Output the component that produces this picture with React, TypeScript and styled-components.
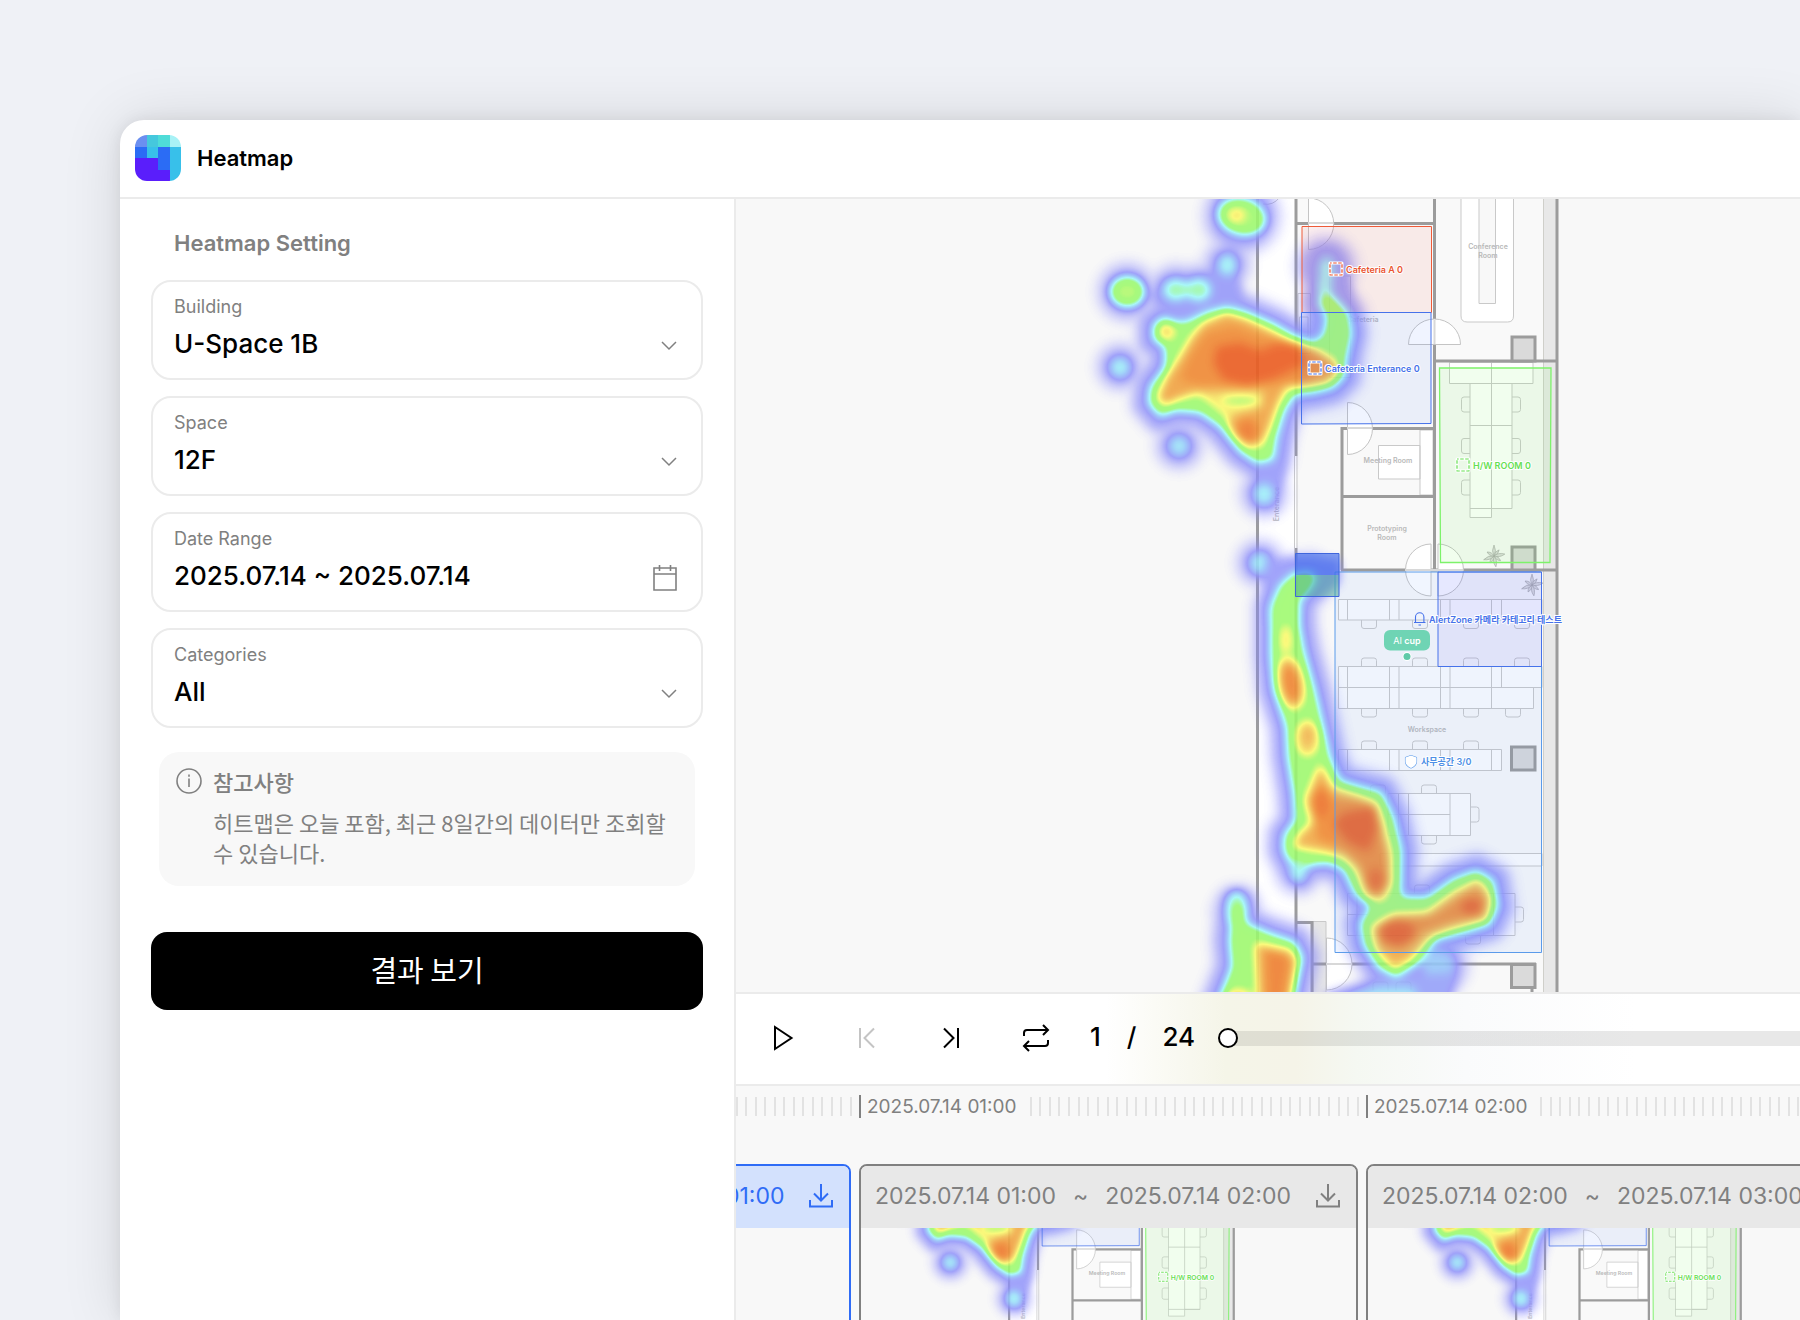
import React, { useId, useLayoutEffect, useRef, useState } from "react";
import styled, { createGlobalStyle, css } from "styled-components";

const font = `Inter, "Noto Sans CJK KR", sans-serif`;
const koreanFont = `"Noto Sans CJK KR", Inter, sans-serif`;

const color = {
  page: "#eff1f6",
  line: "#ebebeb",
  surface: "#f8f8f8",
  muted: "#808080",
  track: "#e8e8e8",
  blue: "#2f6cf6",
  blueSoft: "#d3e1fd",
};

const GlobalStyle = createGlobalStyle`
  *, *::before, *::after { box-sizing: border-box; }
  body { margin: 0; background: ${color.page}; font-family: ${font}; color: #000; }
  button, input, select { font: inherit; color: inherit; }
  h1, h2, p { margin: 0; }
`;

const Page = styled.div`
  display: flex;
  height: 100vh;
  padding: 120px 0 0 120px;
  overflow: hidden;
`;

const Window = styled.div`
  flex: 1;
  min-width: 0;
  display: flex;
  flex-direction: column;
  background: #fff;
  border-top-left-radius: 24px;
  overflow: hidden;
  box-shadow: 0 0 60px rgba(0, 0, 0, 0.12), 0 0 16px rgba(0, 0, 0, 0.08);
`;

const Header = styled.header`
  display: flex;
  align-items: center;
  gap: 16px;
  padding: 15px 15px 16px;
  border-bottom: 2px solid ${color.line};
`;

const AppName = styled.h1`
  font-size: 22px;
  line-height: 46px;
  font-weight: 600;
`;

const Body = styled.div`
  flex: 1;
  min-height: 0;
  display: flex;
`;

const Sidebar = styled.aside`
  flex: 0 0 616px;
  padding: 24px 31px;
  border-right: 2px solid ${color.line};
`;

const PanelTitle = styled.h2`
  padding: 4px 23px;
  margin-bottom: 17px;
  font-size: 22px;
  line-height: 32px;
  font-weight: 600;
  color: ${color.muted};
`;

const Form = styled.form`
  display: flex;
  flex-direction: column;
  gap: 16px;
`;

const Field = styled.div`
  display: flex;
  flex-direction: column;
  gap: 10px;
  padding: 14px 21px 18px;
  border: 2px solid ${color.line};
  border-radius: 20px;
`;

const FieldLabel = styled.label`
  font-size: 18px;
  line-height: 22px;
  color: ${color.muted};
`;

const FieldRow = styled.div`
  display: grid;
  align-items: center;
  justify-items: end;
  > * { grid-area: 1 / 1; }
`;

const control = css`
  width: 100%;
  height: 32px;
  padding: 0;
  border: 0;
  background: transparent;
  outline: none;
  appearance: none;
  font-size: 26px;
  line-height: 32px;
  font-weight: 500;
`;

const Select = styled.select`${control}`;
const TextInput = styled.input`${control}`;

const IconSlot = styled.span`
  display: flex;
  padding: 4px 3px 0 0;
  color: ${color.muted};
  pointer-events: none;
`;

const Notice = styled.section`
  display: grid;
  grid-template-columns: 26px 1fr;
  gap: 11px;
  margin: 8px 8px 0;
  padding: 14px 16px 19px 17px;
  border-radius: 20px;
  background: ${color.surface};
  color: ${color.muted};
  font-family: ${koreanFont};
  font-size: 22px;
  line-height: 30px;
`;

const NoticeIcon = styled.span`
  display: flex;
  align-items: center;
`;

const NoticeTitle = styled.h2`
  font-size: 22px;
  line-height: 30px;
  font-weight: 500;
`;

const NoticeText = styled.p`
  grid-column: 2;
`;

const SubmitButton = styled.button`
  height: 78px;
  margin-top: 30px;
  padding-bottom: 6px;
  border: 0;
  border-radius: 16px;
  background: #000;
  color: #fff;
  font-family: ${koreanFont};
  font-size: 29px;
  font-weight: 400;
  cursor: pointer;
`;

const Content = styled.main`
  flex: 1;
  min-width: 0;
  display: flex;
  flex-direction: column;
  background: ${color.surface};
`;

const Stage = styled.div`
  flex: 1;
  min-height: 0;
  overflow: hidden;
`;

const MapSvg = styled.svg`
  display: block;
  width: 100%;
  height: 100%;
  font-family: ${font};
`;

const Player = styled.div`
  display: flex;
  align-items: center;
  height: 94px;
  padding: 0 0 2px 34px;
  border-top: 2px solid ${color.line};
  border-bottom: 2px solid ${color.line};
  background: linear-gradient(90deg, #fff 370px, #f5f5e8 490px, #f5f4e8 560px, #f5f8f2 620px, #fafbfc 730px, #fff 900px);
`;

const Controls = styled.div`
  display: flex;
  gap: 54px;
`;

const IconButton = styled.button`
  display: flex;
  padding: 0;
  border: 0;
  background: none;
  color: #000;
  cursor: pointer;
  &:disabled { color: #c4c4c4; }
`;

const Counter = styled.div`
  display: flex;
  gap: 26px;
  margin: 0 23px 0 38px;
  padding-bottom: 2px;
  font-size: 26px;
  line-height: 32px;
  font-weight: 500;
`;

const Slider = styled.input`
  flex: 1;
  min-width: 0;
  height: 20px;
  margin: 0;
  appearance: none;
  background: linear-gradient(rgba(0, 0, 0, 0.09), rgba(0, 0, 0, 0.09)) 10px center / 100% 15px no-repeat;
  &::-webkit-slider-thumb {
    appearance: none;
    width: 20px;
    height: 20px;
    border: 2px solid #000;
    border-radius: 50%;
    background: #fff;
  }
`;

const Timeline = styled.section`
  flex: 0 0 234px;
  overflow: hidden;
`;

const Ruler = styled.div`
  display: flex;
  width: max-content;
  padding-top: 9px;
  margin-bottom: 46px;
`;

const RulerHour = styled.div`
  display: flex;
  align-items: center;
  gap: 13px;
  width: 507px;
  padding-right: 7px;
`;

const RulerLabel = styled.time`
  padding-left: 6px;
  border-left: 2px solid ${color.muted};
  font-size: 19px;
  line-height: 23px;
  color: ${color.muted};
`;

const Ticks = styled.div`
  flex: 1;
  display: flex;
  justify-content: space-between;
  height: 19px;
`;

const Tick = styled.i`
  width: 2px;
  background: #e2e2e2;
`;

const Frames = styled.div`
  display: flex;
  gap: 8px;
  width: max-content;
`;

const Frame = styled.article<{ $active: boolean }>`
  width: 499px;
  border: 2px solid ${(p) => (p.$active ? color.blue : color.muted)};
  border-radius: 8px;
  overflow: hidden;
  color: ${(p) => (p.$active ? color.blue : color.muted)};
`;

const FrameHeader = styled.header<{ $active: boolean }>`
  display: flex;
  align-items: center;
  justify-content: space-between;
  height: 62px;
  padding: 0 16px 2px 14px;
  background: ${(p) => (p.$active ? color.blueSoft : color.track)};
  font-size: 23px;
  line-height: 28px;
  button { color: inherit; }
`;

const Range = styled.div`
  display: flex;
  gap: 17px;
`;

const FrameMap = styled.div`
  height: 300px;
`;

/* ---------- icons ---------- */

const LogoSvg = styled.svg`
  border-radius: 12px;
`;

const Logo = () => {
  const cells = [
    ["#6b8ff0", "#45c8dd", "#4fdcd8", "#a8f2f6"],
    ["#2b6cf5", "#38c0ea", "#2b6cf5", "#38c0ea"],
    ["#5a1efb", "#5a1efb", "#2b6cf5", "#38c0ea"],
    ["#5a1efb", "#5a1efb", "#5a1efb", "#38c0ea"],
  ];
  return (
    <LogoSvg width="46" height="46" viewBox="0 0 4 4" aria-hidden="true" shapeRendering="crispEdges">
      {cells.map((row, y) => row.map((fill, x) => <rect key={`${x}-${y}`} x={x} y={y} width="1" height="1" fill={fill} />))}
    </LogoSvg>
  );
};

const stroke = { fill: "none", stroke: "currentColor", strokeWidth: 2 };

const Chevron = () => (
  <svg width="16" height="10" viewBox="0 0 16 10" {...stroke} strokeWidth={1.5}>
    <path d="M1 1l7 7 7-7" />
  </svg>
);

const CalendarIcon = () => (
  <svg width="24" height="26" viewBox="0 0 24 26" {...stroke} strokeWidth={1.6}>
    <path d="M1 3h22v22H1zM1 9h22M6.500 0v6M17.500 0v6" />
  </svg>
);

const InfoIcon = () => (
  <svg width="26" height="26" viewBox="0 0 26 26" {...stroke} strokeWidth={1.6}>
    <circle cx="13" cy="13" r="12" />
    <path d="M13 10.500v8.500M13 6.500v2.200" />
  </svg>
);

const PlayIcon = () => (
  <svg width="30" height="30" viewBox="0 0 30 30" {...stroke}>
    <path d="M5 4v22l16.500-11z" />
  </svg>
);

const PrevIcon = () => (
  <svg width="30" height="30" viewBox="0 0 30 30" {...stroke}>
    <path d="M6 5v20M20 5.500L10.500 15l9.500 9.500" />
  </svg>
);

const NextIcon = () => (
  <svg width="30" height="30" viewBox="0 0 30 30" {...stroke}>
    <path d="M20 5v20M6 5.500l9.500 9.500L6 24.500" />
  </svg>
);

const RepeatIcon = () => (
  <svg width="30" height="30" viewBox="0 0 30 30" {...stroke}>
    <path d="M2 13v-3a3 3 0 0 1 3-3h21M21 2l5 5-5 5M26 17v3a3 3 0 0 1-3 3H2M7 18l-5 5 5 5" />
  </svg>
);

const DownloadIcon = () => (
  <svg width="24" height="24" viewBox="0 0 24 24" {...stroke}>
    <path d="M12 0v16M5 9.500l7 7 7-7M1 16v6.500h22V16" />
  </svg>
);

/* ---------- floor map ---------- */

const gray = (v: number) => {
  const c = Math.round(v * 255);
  return `rgb(${c},${c},${c})`;
};

type Blob = { level: number; points?: string; e?: [number, number, number, number, number?] };

const halo1 = "440,365 500,350 560,365 640,400 700,435 760,455 790,435 800,380 775,335 795,305 825,325 865,370 875,430 860,500 855,560 820,595 760,610 705,615 675,660 650,740 640,810 590,820 540,785 480,710 420,668 350,662 300,680 265,640 270,590 315,530 315,470 280,450 280,405 310,380 350,395 380,395";
const halo2 = "280,100 330,92 350,110 330,150 300,180 300,260 312,330 345,450 370,560 390,650 420,720 480,738 545,755 582,830 606,930 604,1070 680,1072 760,1015 830,990 882,1020 895,1100 870,1155 790,1180 710,1200 655,1270 590,1312 535,1285 490,1215 480,1150 510,1100 465,1065 430,990 385,970 330,975 300,1010 280,990 250,930 252,885 285,840 280,760 262,650 258,560 222,450 212,350 212,200 240,135";
const halo3 = "100,1090 125,1090 140,1150 210,1180 285,1205 308,1250 285,1360 280,1420 40,1420 95,1280 88,1200";

const upper: Blob[] = [
  { level: 0.2, points: "300,260 450,240 520,180 540,270 560,350 400,420 330,360 270,330" },
  { level: 0.2, points: "770,170 830,165 865,240 885,330 905,430 880,520 790,450 745,420 745,260" },
  { level: 0.2, points: "600,600 720,600 680,850 650,960 580,960 580,850" },
  { level: 0.39, e: [180, 532, 30, 30] },
  { level: 0.62, e: [202, 305, 50, 44] },
  { level: 0.46, e: [348, 300, 38, 32] },
  { level: 0.46, e: [415, 300, 38, 34] },
  { level: 0.4, e: [502, 225, 28, 32] },
  { level: 0.37, e: [357, 768, 30, 30] },
  { level: 0.39, e: [612, 912, 30, 32] },
  { level: 0.38, e: [600, 1120, 30, 32] },
  { level: 0.6, e: [545, 80, 72, 54, 15] },
  { level: 0.76, e: [530, 76, 26, 20] },
  { level: 0.4, e: [800, 240, 22, 40] },
  { level: 0.4, e: [795, 290, 22, 40] },
  { level: 0.58, points: halo1 },
  { level: 0.76, e: [320, 425, 26, 26] },
  { level: 0.74, points: "400,600 640,590 610,660 520,700 450,640" },
  { level: 0.86, points: "430,400 500,370 560,388 640,425 700,455 760,475 822,510 836,545 800,578 740,588 680,594 655,640 626,720 604,765 562,772 522,735 500,690 540,670 610,650 610,602 420,606 360,625 315,645 292,625 320,560 360,500 395,440" },
  { level: 0.6, e: [540, 632, 56, 15] },
  { level: 0.91, points: "440,430 520,410 600,440 700,460 780,495 805,540 740,575 600,585 420,585 360,570 390,500" },
  { level: 0.94, e: [562, 722, 32, 34] },
  { level: 1, points: "470,470 540,458 600,482 650,460 710,460 740,520 640,568 560,588 490,570 460,520" },
];

const lower: Blob[] = [
  { level: 0.38, e: [180, 70, 30, 30] },
  { level: 0.2, points: "200,60 280,50 420,60 420,130 330,200 190,250 190,120" },
  { level: 0.31, e: [715, 1275, 48, 44] },
  { level: 0.22, points: "350,1420 380,1360 480,1330 560,1310 780,1300 740,1420" },
  { level: 0.36, points: "400,1420 460,1365 530,1340 640,1340 680,1420" },
  { level: 0.44, e: [110, 1110, 32, 60] },
  { level: 0.58, points: halo2 },
  { level: 0.58, points: halo3 },
  { level: 0.42, e: [295, 990, 24, 36] },
  { level: 0.74, e: [258, 300, 18, 46] },
  { level: 0.84, e: [272, 430, 38, 78, -10] },
  { level: 0.93, e: [274, 430, 22, 54, -10] },
  { level: 0.78, e: [322, 595, 34, 54] },
  { level: 0.84, e: [324, 588, 16, 26] },
  { level: 0.84, points: "360,670 400,745 480,770 530,790 552,860 572,940 574,1030 548,1082 500,1070 470,990 430,950 370,935 280,920 300,880 335,850 315,780" },
  { level: 0.91, points: "360,720 400,780 480,785 530,810 540,880 560,960 560,1030 530,1060 500,1040 480,970 420,920 350,900 345,800" },
  { level: 0.84, points: "515,1160 580,1122 680,1118 760,1060 835,1020 872,1070 860,1138 760,1164 690,1190 630,1262 580,1285 530,1230" },
  { level: 0.91, points: "540,1160 600,1140 700,1130 780,1075 835,1050 860,1090 840,1125 740,1145 660,1175 600,1230 550,1210" },
  { level: 1, points: "400,850 430,820 520,800 535,860 505,935 440,905" },
  { level: 0.98, e: [528, 1022, 26, 36] },
  { level: 1, e: [592, 1178, 54, 38] },
  { level: 1, e: [815, 1100, 32, 24] },
  { level: 0.96, e: [362, 790, 24, 44] },
  { level: 0.84, points: "165,1208 270,1230 292,1262 268,1420 175,1420" },
  { level: 0.93, points: "195,1230 260,1245 270,1270 245,1420 200,1420" },
  { level: 0.8, e: [115, 1375, 40, 26] },
];

const halos: [string, string][] = [
  ["translate(1060 190) scale(.3333)", halo1],
  ["translate(1200 540) scale(.3333)", halo2],
  ["translate(1200 540) scale(.3333)", halo3],
];

const Blobs = ({ blobs }: { blobs: Blob[] }) => (
  <>
    {blobs.map((b, i) =>
      b.points ? (
        <polygon key={i} points={b.points} fill={gray(b.level)} />
      ) : (
        <ellipse key={i} cx={b.e![0]} cy={b.e![1]} rx={b.e![2]} ry={b.e![3]} transform={`rotate(${b.e![4] ?? 0} ${b.e![0]} ${b.e![1]})`} fill={gray(b.level)} />
      )
    )}
  </>
);

const glowDots: [number, number, number][] = [
  [1120, 367, 21], [1127, 292, 27], [1179, 446, 21], [1264, 494, 21], [1260, 563, 21], [1242, 216, 36], [1227, 264, 21],
  [1237, 912, 22], [1438, 965, 28], [1166, 331, 24], [1326, 266, 28], [1176, 290, 23], [1198, 290, 23], [1298, 872, 20], [1400, 990, 36],
];

const glowSteps = [
  { w: 136, v: 0.03, grow: 8 },
  { w: 108, v: 0.08, grow: 3 },
  { w: 78, v: 0.18, grow: -4 },
];

const HeatLayer = () => {
  const id = useId();
  return (
    <>
      <filter id={id} filterUnits="userSpaceOnUse" x="1000" y="150" width="600" height="900" colorInterpolationFilters="sRGB">
        <feGaussianBlur stdDeviation="5" />
        <feColorMatrix values="1 0 0 0 0  1 0 0 0 0  1 0 0 0 0  1 0 0 0 0" />
        <feComponentTransfer>
          <feFuncR type="table" tableValues=".5 .52 .56 .58 .62 .6 .62 .98 .95 .94 .92" />
          <feFuncG type="table" tableValues=".5 .52 .57 .76 .97 .98 .98 .98 .76 .56 .37" />
          <feFuncB type="table" tableValues="1 .98 .98 .98 .97 .45 .42 .43 .34 .22 .14" />
          <feFuncA type="table" tableValues="0 .4 .84 .88 .88 .88 .88 .9 .92 .92 .92" />
        </feComponentTransfer>
      </filter>
      <g filter={`url(#${id})`}>
        <rect x="960" y="110" width="700" height="960" fill="#000" />
        {glowSteps.map(({ w, v, grow }) => (
          <g key={w} fill={gray(v)} stroke={gray(v)} strokeWidth={w} strokeLinejoin="round">
            {halos.map(([transform, points]) => (
              <polygon key={points} points={points} transform={transform} />
            ))}
            {glowDots.map(([x, y, r]) => (
              <circle key={`${x}-${y}`} cx={x} cy={y} r={r + grow} strokeWidth="0" />
            ))}
          </g>
        ))}
        <g transform="translate(1060 190) scale(.3333)"><Blobs blobs={upper} /></g>
        <g transform="translate(1200 540) scale(.3333)"><Blobs blobs={lower} /></g>
      </g>
    </>
  );
};

const chair = (x: number, y: number, side: "t" | "b" | "l" | "r") => {
  if (side === "b") return `M${x} ${y}v6q0 2.500 2.500 2.500h10q2.500 0 2.500-2.500v-6`;
  if (side === "t") return `M${x} ${y}v-6q0-2.500 2.500-2.500h10q2.500 0 2.500 2.500v6`;
  if (side === "r") return `M${x} ${y}h6q2.500 0 2.500 2.500v10q0 2.500-2.500 2.500h-6`;
  return `M${x} ${y}h-6q-2.500 0-2.500 2.500v10q0 2.500 2.500 2.500h6`;
};

const chairs = [
  ...[397, 438.5, 480].flatMap((y) => [chair(1470, y, "l"), chair(1512, y, "r")]),
  ...[1361.5, 1412.5, 1463.5, 1514.5].flatMap((x) => [chair(x, 620, "b"), chair(x, 666.5, "t")]),
  ...[1361.5, 1412.5, 1463.5, 1505.5].map((x) => chair(x, 708.5, "b")),
  ...[1361.5, 1412.5, 1463.5].map((x) => chair(x, 749.5, "t")),
  chair(1370.5, 793.5, "t"), chair(1421.5, 793.5, "t"), chair(1421.5, 835.5, "b"), chair(1470.5, 807, "r"),
  chair(1414.5, 893.5, "t"), chair(1465.5, 935.5, "b"), chair(1515, 907, "r"),
  chair(1373, 990.5, "t"), chair(1396, 990.5, "t"),
].join("");

const Plant = ({ x, y }: { x: number; y: number }) => (
  <g transform={`translate(${x} ${y})`} fill="#dcdcdc" stroke="#a6a6a6" strokeWidth=".6">
    {[0, 40, 80, 125, 170, 210, 250, 300].map((a, i) => (
      <path key={a} transform={`rotate(${a})`} d={i % 2 ? "M0 0Q-2.500-4 0-8Q2.500-4 0 0" : "M0 0Q-3-5 0-11Q3-5 0 0"} />
    ))}
  </g>
);

type RoomName = { x: number; y: number; name: string; upright?: boolean };

const roomNames: RoomName[] = [
  { x: 1488, y: 249, name: "Conference" },
  { x: 1488, y: 258, name: "Room" },
  { x: 1363, y: 322, name: "Cafeteria" },
  { x: 1388, y: 463, name: "Meeting Room" },
  { x: 1387, y: 531, name: "Prototyping" },
  { x: 1387, y: 540, name: "Room" },
  { x: 1427, y: 732, name: "Workspace" },
  { x: 1279, y: 504, name: "Enterance", upright: true },
];

const FloorPlan = ({ top }: { top: number }) => (
  <>
    <rect x="1258" y="190" width="38" height="810" fill="#fff" />
    <rect x="1296" y="190" width="260" height="810" fill="#f9f9f9" />
    <rect x="1543" y="190" width="13" height="810" fill="#e8e8e8" />
    <path d="M1543.500 190v810" stroke="#cfcfca" />
    <g fill="#fff" stroke="#c9c9c9">
      <path d="M1461 190v126q0 6 6 6h40.500q6 0 6-6V190z" />
      <path d="M1479 190v113.500h16.500V190" fill="#f8f8f8" />
      <path d="M1449.500 362.500h83.500v21h-83.500zM1470 383.500h42v125h-20.500v9H1470zM1491.500 362v147M1470 425.500h42M1470 508.500h42" />
      <path d="M1378.500 445.500h41.500V479h-41.500zM1420 430h13v65h-13z" />
      <path d="M1298 293.500h12.500v60H1298zM1299.500 317h8.500v19h-8.500zM1329.500 276h21v101.500h-21z" fill="none" />
      <g fill="#fdfdfd">
        <path d="M1338.500 599.500H1542V620h-203.500zM1338.500 666.500H1542v21h-203.500zM1338.500 687.500h195v21h-195zM1338.500 749.500h163v21h-163zM1388 793.500h82.500v42H1388zM1347.500 893.500H1515v42h-167.500zM1380 853.500h162V866h-162z" />
        <path d="M1347.500 599.500V620m0 46.500v42m0 41v21M1389.500 599.500V620m0 46.500v42m0 41v21M1399 599.500V620m0 46.500v42m0 41v21M1440.500 599.500V620m0 46.500v42m0 41v21M1450 599.500V620m0 46.500v42m0 41v21M1491.500 599.500V620m0 46.500v42m0 41v21M1501.500 599.500V620m0 46.500v21M1398.500 793.500v42M1408.500 793.500v42M1450 793.500v42M1388 814.500h62M1357 893.500v42M1493.500 893.500v42M1347.500 914.500h20" />
      </g>
      <path d={chairs} fill="none" />
      <path d="M1313 921.500h13V1000h-13z" fill="#e6e6e6" />
    </g>
    <g fill="none" stroke="#9c9c9c" strokeWidth="3">
      <path d="M1257.500 190v810M1296 190v266M1296 548v452M1296 223.500h138M1434.500 190v380M1434 361h123M1557 190v810M1341 428.500h93M1342 427v143M1342 496.500h92M1341 570h215M1296 922.500h16V1000M1313 964h223M1532 988v12" />
      <g fill="#dadada">
        <path d="M1512 337h23v24h-23zM1512 547h23v23h-23zM1511.500 747h23.500v23h-23.500zM1511.500 964.500h23.500v23h-23.500z" />
      </g>
    </g>
    <path d="M1294.500 456v92M1297 456v92" stroke="#c9c9c9" />
    <g fill="#fff" stroke="#c4c4c4">
      <path d="M1308.500 198a25 25.500 0 0 1 0 51.500zM1408.500 344.500a26 25.500 0 0 1 52 0zM1347.500 402.500a25 26 0 0 1 0 52zM1431 544a25.500 26 0 0 0 0 52zM1438 544a25.500 26 0 0 1 0 52zM1326.500 938a25.500 26 0 0 1 0 52z" />
      <path d="M1308 223h25M1347 428h25M1405 570h58M1326 964h25M1434.500 320v24" stroke="#d8d8d8" strokeWidth="2" />
      <path d="M1263 204q10 2 17-7" fill="none" />
    </g>
    <Plant x={1494} y={556} />
    <Plant x={1532} y={585} />
    <g fill="#b9b9b9" fontSize="7" fontWeight="600" textAnchor="middle">
      {roomNames.filter((r) => r.y > top).map((r) => (
        <text key={`${r.name}-${r.y}`} transform={`translate(${r.x} ${r.y})${r.upright ? " rotate(-90)" : ""}`}>{r.name}</text>
      ))}
    </g>
  </>
);

const Zones = () => (
  <>
    <path d="M1302 226.500h129.500v86H1302z" fill="rgba(245,70,40,.08)" stroke="#ee5a38" />
    <path d="M1301.500 312.500h129.500V423.500l-129.500.5z" fill="rgba(70,120,250,.08)" stroke="#4672ea" />
    <path d="M1439.500 368H1551l-1 194.500h-109.500z" fill="rgba(120,250,90,.1)" stroke="#7df26a" strokeWidth="1.300" />
    <path d="M1335 572h206.500v380.500H1335z" fill="rgba(80,140,250,.08)" stroke="#5b9bea" />
    <path d="M1438 572h103.500v94.500H1438z" fill="rgba(80,60,250,.07)" stroke="#4672ea" />
    <path d="M1295.500 553.500h43.500V575h-43.500z" fill="rgba(58,104,232,.62)" />
    <path d="M1295.500 575h43.500v21.500h-43.500z" fill="rgba(60,165,140,.48)" />
    <path d="M1295.500 553.500h43.500v43h-43.500z" fill="none" stroke="#3f66dc" />
  </>
);

const ZoneMark = ({ x, y, ink }: { x: number; y: number; ink: string }) => (
  <g fill="none">
    <rect x={x} y={y} width="12" height="12" stroke="#fff" strokeWidth="3" />
    <rect x={x} y={y} width="12" height="12" stroke={ink} strokeWidth="1.200" strokeDasharray="3.500 1.500" strokeDashoffset="1.800" />
  </g>
);

const zoneLabels = [
  { x: 1346, y: 273, ink: "#ea5431", name: "Cafeteria A 0" },
  { x: 1325, y: 372, ink: "#4672ea", name: "Cafeteria Enterance 0" },
  { x: 1473, y: 469, ink: "#66e052", name: "H/W ROOM 0" },
];

const MapLabels = ({ top }: { top: number }) => (
  <g fontSize="9" fontWeight="600" stroke="#fff" strokeWidth="2" strokeLinejoin="round" paintOrder="stroke">
    {zoneLabels.filter((z) => z.y > top).map((z) => (
      <g key={z.name}>
        <ZoneMark x={z.x - 16} y={z.y - 10} ink={z.ink} />
        <text x={z.x} y={z.y} fill={z.ink}>{z.name}</text>
      </g>
    ))}
    <path d="M1414 622.500h11.500M1415.500 622v-5a4.200 4.200 0 0 1 8.400 0v5M1418.500 625h2.500" stroke="#4672ea" strokeWidth="1.100" fill="none" />
    <text x="1429" y="623" fill="#4672ea">AlertZone 카메라 카테고리 테스트</text>
    <path d="M1411 755.500l5.500 2v4q0 4-5.500 6.500q-5.500-2.500-5.500-6.500v-4z" stroke="#5b9bea" strokeWidth="1.100" fill="#fff" />
    <text x="1421" y="765" fill="#4d8fe6">사무공간 3/0</text>
    <g stroke="none">
      <rect x="1384" y="630" width="46" height="20.500" rx="6" fill="#6fd4b4" />
      <text x="1407" y="644" fill="#fff" textAnchor="middle"><tspan fontWeight="400">AI</tspan> <tspan>cup</tspan></text>
      <circle cx="1407" cy="656.500" r="3.500" fill="#5fcaa8" stroke="#fff" />
    </g>
  </g>
);

const HeatMap = ({ box }: { box: [number, number, number, number] }) => (
  <MapSvg viewBox={box.join(" ")} preserveAspectRatio="xMinYMin slice" role="img" aria-label="12F">
    <FloorPlan top={box[1]} />
    <HeatLayer />
    <Zones />
    <MapLabels top={box[1]} />
  </MapSvg>
);

/* ---------- page ---------- */

const hours = ["00:00", "01:00", "02:00", "03:00", "04:00"];
const day = "2025.07.14";

const SelectField = ({ id, label, options }: { id: string; label: string; options: string[] }) => (
  <Field>
    <FieldLabel htmlFor={id}>{label}</FieldLabel>
    <FieldRow>
      <Select id={id}>
        {options.map((o) => <option key={o}>{o}</option>)}
      </Select>
      <IconSlot><Chevron /></IconSlot>
    </FieldRow>
  </Field>
);

const HourTimeline = () => {
  const ref = useRef<HTMLElement>(null);
  useLayoutEffect(() => {
    if (ref.current) ref.current.scrollLeft = 384;
  }, []);
  return (
    <Timeline ref={ref}>
      <Ruler>
        {hours.slice(0, 3).map((h) => (
          <RulerHour key={h}>
            <RulerLabel>{day} {h}</RulerLabel>
            <Ticks>{Array.from({ length: 35 }, (_, i) => <Tick key={i} />)}</Ticks>
          </RulerHour>
        ))}
      </Ruler>
      <Frames>
        {hours.slice(0, 3).map((h, i) => (
          <Frame key={h} $active={i === 0}>
            <FrameHeader $active={i === 0}>
              <Range>
                <time>{day} {h}</time>
                <span>~</span>
                <time>{day} {hours[i + 1]}</time>
              </Range>
              <IconButton aria-label="Download"><DownloadIcon /></IconButton>
            </FrameHeader>
            <FrameMap>
              {i > 0 && <HeatMap box={[1060, 400, 660, 400]} />}
            </FrameMap>
          </Frame>
        ))}
      </Frames>
    </Timeline>
  );
};

export default function App() {
  const [step, setStep] = useState(1);
  return (
    <>
      <GlobalStyle />
      <Page>
        <Window>
          <Header>
            <Logo />
            <AppName>Heatmap</AppName>
          </Header>
          <Body>
            <Sidebar>
              <PanelTitle>Heatmap Setting</PanelTitle>
              <Form onSubmit={(e) => e.preventDefault()}>
                <SelectField id="building" label="Building" options={["U-Space 1B"]} />
                <SelectField id="space" label="Space" options={["12F"]} />
                <Field>
                  <FieldLabel htmlFor="range">Date Range</FieldLabel>
                  <FieldRow>
                    <TextInput id="range" type="text" defaultValue="2025.07.14 ~ 2025.07.14" />
                    <IconSlot><CalendarIcon /></IconSlot>
                  </FieldRow>
                </Field>
                <SelectField id="categories" label="Categories" options={["All"]} />
                <Notice>
                  <NoticeIcon><InfoIcon /></NoticeIcon>
                  <NoticeTitle>참고사항</NoticeTitle>
                  <NoticeText>히트맵은 오늘 포함, 최근 8일간의 데이터만 조회할 수 있습니다.</NoticeText>
                </Notice>
                <SubmitButton type="submit">결과 보기</SubmitButton>
              </Form>
            </Sidebar>
            <Content>
              <Stage><HeatMap box={[736, 199, 1064, 793]} /></Stage>
              <Player>
                <Controls>
                  <IconButton aria-label="Play"><PlayIcon /></IconButton>
                  <IconButton aria-label="Previous" disabled={step === 1}><PrevIcon /></IconButton>
                  <IconButton aria-label="Next" onClick={() => setStep(Math.min(24, step + 1))}><NextIcon /></IconButton>
                  <IconButton aria-label="Repeat"><RepeatIcon /></IconButton>
                </Controls>
                <Counter>
                  <span>{step}</span>
                  <span>/</span>
                  <span>24</span>
                </Counter>
                <Slider type="range" aria-label="Time" min={1} max={24} value={step} onChange={(e) => setStep(Number(e.target.value))} />
              </Player>
              <HourTimeline />
            </Content>
          </Body>
        </Window>
      </Page>
    </>
  );
}
